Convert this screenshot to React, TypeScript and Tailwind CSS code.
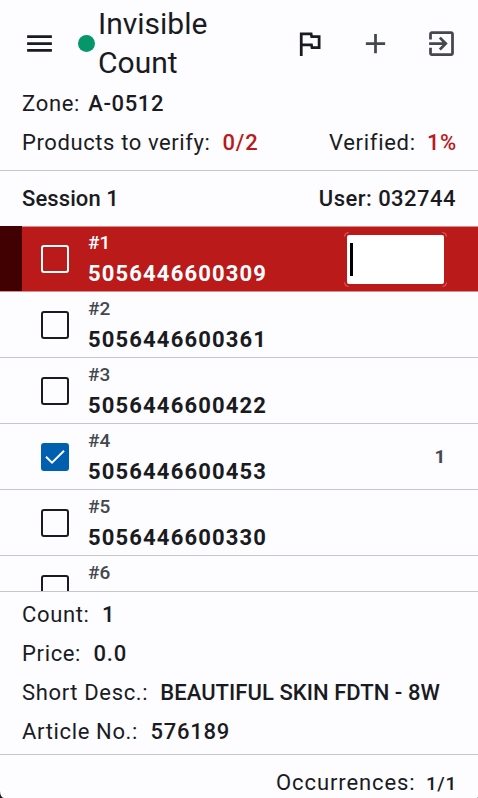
import { clsx } from "clsx";

interface CountItem {
  index: number;
  barcode?: string;
  checked?: boolean;
  active?: boolean;
  quantity?: number;
}

const items: CountItem[] = [
  { index: 1, barcode: "5056446600309", active: true },
  { index: 2, barcode: "5056446600361" },
  { index: 3, barcode: "5056446600422" },
  { index: 4, barcode: "5056446600453", checked: true, quantity: 1 },
  { index: 5, barcode: "5056446600330" },
  { index: 6 },
];

const details = [
  { label: "Count:", value: "1" },
  { label: "Price:", value: "0.0" },
  { label: "Short Desc.:", value: "BEAUTIFUL SKIN FDTN - 8W", tight: true },
  { label: "Article No.:", value: "576189" },
];

// 24-unit icon drawn at 33px
function Icon({ d, className }: { d: string; className?: string }) {
  return (
    <svg viewBox="0 0 24 24" className={clsx("size-[33px] shrink-0 fill-current", className)}>
      <path d={d} />
    </svg>
  );
}

function TopBar() {
  return (
    <header className="flex h-[84px] shrink-0 items-center pl-[23px] pr-5 pt-[3px]">
      <Icon d="M3 18h18v-2H3v2zm0-5h18v-2H3v2zm0-7v2h18V6H3z" />
      <span className="ml-[22px] size-[17px] shrink-0 rounded-full bg-[#059669]" />
      <h1 className="-mt-0.5 ml-[3px] w-[140px] text-[30px] leading-[39px] tracking-normal">
        Invisible Count
      </h1>
      <div className="ml-auto flex gap-[33px] text-[#44474e]">
        <Icon
          d="M12.36 6l.4 2H18v6h-3.36l-.4-2H7V6h5.36M14 4H5v17h2v-7h5.6l.4 2h7V6h-5.6L14 4z"
          className="text-[#1a1b1f]"
        />
        <Icon d="M19 13h-6v6h-2v-6H5v-2h6V5h2v6h6v2z" />
        <Icon d="M10.09 15.59L11.5 17l5-5-5-5-1.41 1.41L12.67 11H3v2h9.67l-2.58 2.59zM19 3H5c-1.11 0-2 .9-2 2v4h2V5h14v14H5v-4H3v4c0 1.1.89 2 2 2h14c1.1 0 2-.9 2-2V5c0-1.1-.9-2-2-2z" />
      </div>
    </header>
  );
}

function Checkbox({ checked, active }: { checked?: boolean; active?: boolean }) {
  if (checked) {
    return (
      <span className="flex size-7 shrink-0 items-center justify-center rounded-[3px] bg-[#005faf]">
        <svg viewBox="0 0 28 28" className="size-7 fill-none stroke-white stroke-2">
          <path d="M5 13.7 L11 19.7 L23 7.7" />
        </svg>
      </span>
    );
  }
  return (
    <span
      className={clsx(
        "size-7 shrink-0 rounded-[3px] border-2",
        active ? "border-white" : "border-[#1a1b1f]"
      )}
    />
  );
}

function QuantityInput() {
  return (
    <div className="relative ml-auto mr-[31px] mt-[6px] h-[55px] w-[103px] p-[3px]">
      <svg viewBox="0 0 103 55" className="absolute inset-0 h-[55px] w-[103px] fill-none stroke-[#dc6a6a]">
        <path d="M.5 4.5a4 4 0 0 1 4-4M98.5 .5a4 4 0 0 1 4 4M102.5 50.5a4 4 0 0 1-4 4M4.5 54.5a4 4 0 0 1-4-4" />
      </svg>
      <div className="h-[49px] w-[97px] rounded-[2px] bg-white pl-[3px] pt-2">
        <div className="h-[33px] w-[3px] bg-black" />
      </div>
    </div>
  );
}

function ItemRow({ item }: { item: CountItem }) {
  return (
    <li
      className={clsx(
        "flex h-[66px] shrink-0 items-start border-b",
        item.active
          ? "border-[#dd8c8c] bg-[#ba1a1a] text-white shadow-[inset_0_1px_#dd8c8c]"
          : "border-[#c4c6d0]"
      )}
    >
      <span className={clsx("h-[65px] w-[22px] shrink-0", item.active && "bg-[#410002]")} />
      <div className="ml-[19px] mt-[19px] flex">
        <Checkbox checked={item.checked} active={item.active} />
      </div>
      <div className="ml-[19px]">
        <p
          className={clsx(
            "h-8 text-[19px] leading-[33px] font-medium tracking-[0.1px]",
            !item.active && "text-[#44474e]"
          )}
        >
          #{item.index}
        </p>
        {item.barcode && (
          <p className="text-[22px] leading-[31px] font-bold tracking-[1.15px]">{item.barcode}</p>
        )}
      </div>
      {item.active && <QuantityInput />}
      {item.quantity && (
        <span className="ml-auto mr-8 text-[19px] leading-[65px] font-bold text-[#44474e]">
          {item.quantity}
        </span>
      )}
    </li>
  );
}

export default function App() {
  return (
    <div className="h-[798px] w-[478px] overflow-hidden bg-[#1a1b1f] font-[Roboto,sans-serif] text-[#1a1b1f]">
      <div className="flex h-[798px] flex-col rounded-bl-[4px_7px] rounded-br-[1px] bg-[#fdfcff] text-[22px] leading-[39px] tracking-[0.7px]">
        <TopBar />

        <section className="h-[86px] shrink-0 pl-[22px] pr-[21px]">
          <p>
            Zone: <span className="ml-0.5 font-medium tracking-[0.6px]">A-0512</span>
          </p>
          <div className="flex justify-between">
            <p>
              <span className="tracking-[0.6px]">Products to verify: </span>
              <span className="ml-1.5 font-medium tracking-[0.8px] text-[#ba1a1a]">0/2</span>
            </p>
            <p>
              Verified: <span className="ml-[5px] font-medium text-[#ba1a1a]">1%</span>
            </p>
          </div>
        </section>

        <div className="flex h-14 shrink-0 items-center justify-between border-t border-[#c6c6c9] px-[22px] font-medium">
          <p className="tracking-[0.1px]">Session 1</p>
          <p className="tracking-[0.47px]">User: 032744</p>
        </div>

        <ul className="flex h-[365px] shrink-0 flex-col overflow-hidden">
          {items.map((item) => (
            <ItemRow key={item.index} item={item} />
          ))}
        </ul>

        <section className="h-[163px] shrink-0 border-t border-[#c6c6c9] px-[22px] pt-[3px]">
          {details.map(({ label, value, tight }) => (
            <p key={label} className="whitespace-nowrap tracking-[0.65px]">
              {label}
              <span
                className={clsx(
                  "font-medium",
                  tight ? "ml-3 tracking-[0.05px]" : "ml-[12.5px] tracking-[0.75px]"
                )}
              >
                {value}
              </span>
            </p>
          ))}
        </section>

        <footer className="flex h-[44px] shrink-0 justify-end border-t border-[#c6c6c9] pl-[22px] pr-[21px] pt-2">
          <p>
            <span className="tracking-[0.9px]">Occurrences: </span>
            <span className="ml-1 text-[19px] font-medium">1/1</span>
          </p>
        </footer>
      </div>
    </div>
  );
}
